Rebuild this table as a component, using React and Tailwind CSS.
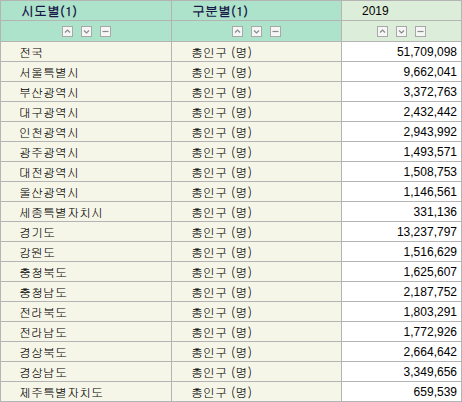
import React from "react";

const ROWS = [
  ["전국", "51,709,098"],
  ["서울특별시", "9,662,041"],
  ["부산광역시", "3,372,763"],
  ["대구광역시", "2,432,442"],
  ["인천광역시", "2,943,992"],
  ["광주광역시", "1,493,571"],
  ["대전광역시", "1,508,753"],
  ["울산광역시", "1,146,561"],
  ["세종특별자치시", "331,136"],
  ["경기도", "13,237,797"],
  ["강원도", "1,516,629"],
  ["충청북도", "1,625,607"],
  ["충청남도", "2,187,752"],
  ["전라북도", "1,803,291"],
  ["전라남도", "1,772,926"],
  ["경상북도", "2,664,642"],
  ["경상남도", "3,349,656"],
  ["제주특별자치도", "659,539"],
];

const KR = "font-['Gulim','Noto_Sans_CJK_KR','Noto_Sans',sans-serif]";

function SortButtons() {
  const btn = "w-[11px] h-[11px] border border-[#a8a8a8] bg-[#f6f6f6] flex items-center justify-center";
  return (
    <div className="flex items-center justify-center gap-[8px]">
      <span className={btn}>
        <svg width="7" height="5" viewBox="0 0 7 5">
          <path d="M1 3.5 L3.5 1 L6 3.5" fill="none" stroke="#8a8a8a" strokeWidth="1.2" />
        </svg>
      </span>
      <span className={btn}>
        <svg width="7" height="5" viewBox="0 0 7 5">
          <path d="M1 1.5 L3.5 4 L6 1.5" fill="none" stroke="#8a8a8a" strokeWidth="1.2" />
        </svg>
      </span>
      <span className={btn}>
        <svg width="7" height="5" viewBox="0 0 7 5">
          <path d="M0.5 2.5 H6.5" fill="none" stroke="#8a8a8a" strokeWidth="1.2" />
        </svg>
      </span>
    </div>
  );
}

export default function App() {
  return (
    <div className={`w-[462px] border-l border-t border-[#b4b4b4] text-[12px] text-black ${KR}`}>
      {/* header */}
      <div className="flex h-[20px]">
        <div className="w-[171px] border-r border-b border-[#b4b4b4] bg-[#aee3cb] pl-[20px] flex items-center font-bold text-[13px] text-[#1a1a4a]">
          시도별(1)
        </div>
        <div className="w-[170px] border-r border-b border-[#b4b4b4] bg-[#aee3cb] pl-[20px] flex items-center font-bold text-[13px] text-[#1a1a4a]">
          구분별(1)
        </div>
        <div className="w-[120px] border-r border-b border-[#b4b4b4] bg-[#dcedd9] pl-[20px] flex items-center font-['Liberation_Sans',sans-serif]">
          2019
        </div>
      </div>
      <div className="flex h-[21px]">
        <div className="w-[171px] border-r border-b border-[#b4b4b4] bg-[#aee3cb] flex items-center justify-center">
          <SortButtons />
        </div>
        <div className="w-[170px] border-r border-b border-[#b4b4b4] bg-[#aee3cb] flex items-center justify-center">
          <SortButtons />
        </div>
        <div className="w-[120px] border-r border-b border-[#b4b4b4] bg-[#dcedd9] flex items-center justify-center">
          <SortButtons />
        </div>
      </div>
      {ROWS.map(([name, value]) => (
        <div key={name} className="flex h-[20px]">
          <div className="w-[171px] border-r border-b border-[#b4b4b4] bg-[#f6f6e8] pl-[18px] flex items-center">
            {name}
          </div>
          <div className="w-[170px] border-r border-b border-[#b4b4b4] bg-[#f6f6e8] pl-[19px] flex items-center">
            총인구 (명)
          </div>
          <div className="w-[120px] border-r border-b border-[#b4b4b4] bg-white pr-[4px] flex items-center justify-end font-['Liberation_Sans',sans-serif]">
            {value}
          </div>
        </div>
      ))}
    </div>
  );
}
